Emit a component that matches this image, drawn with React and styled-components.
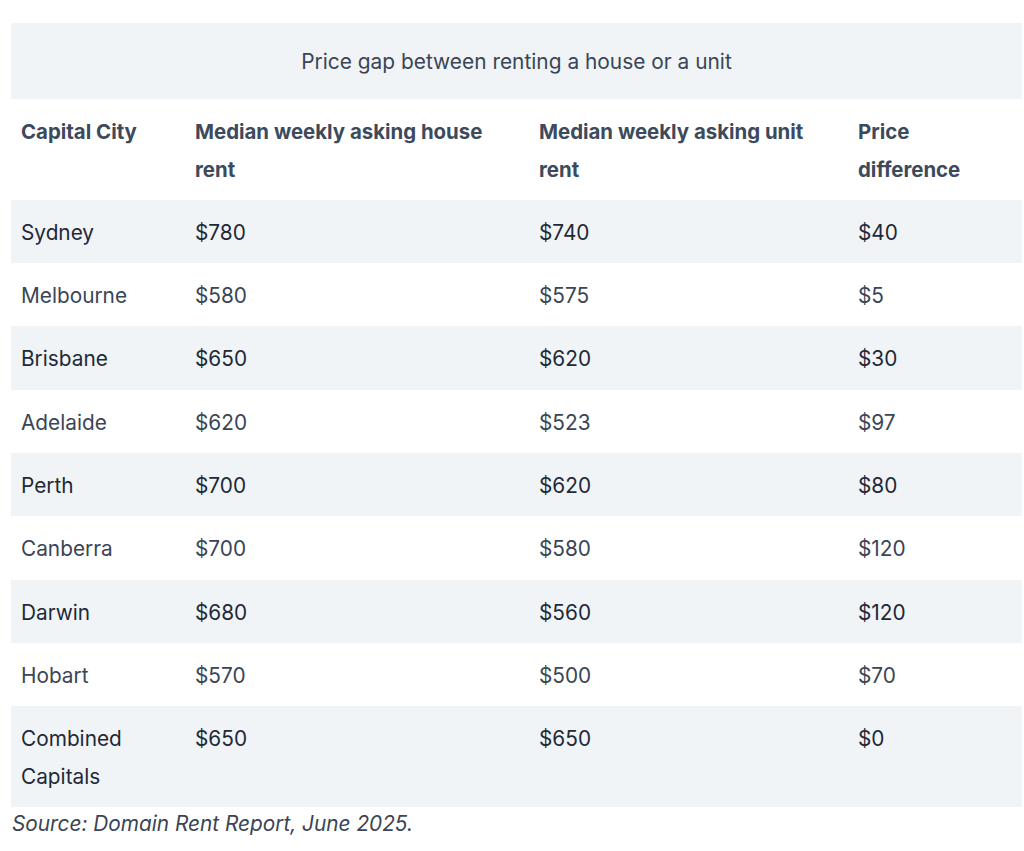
import React from 'react';
import styled, { createGlobalStyle } from 'styled-components';

const GlobalStyle = createGlobalStyle`
  html, body {
    margin: 0;
    padding: 0;
    background: #ffffff;
  }
  body {
    font-family: Inter, "Open Sans", "Liberation Sans", sans-serif;
    color: #2b3647;
  }
`;

const Page = styled.div`
  padding: 23px 2px 0 11px;
`;

const Table = styled.table`
  width: 100%;
  border-collapse: collapse;
  table-layout: fixed;
  font-size: 20.8px;
  line-height: 37.5px;
`;

const Caption = styled.caption`
  background: #f0f4f7;
  color: #3a4556;
  padding: 20px 10px 18px;
  text-align: center;
  font-size: 20.9px;
  line-height: 38px;
`;

const HeadCell = styled.th`
  text-align: left;
  vertical-align: top;
  font-weight: 700;
  font-size: 20.4px;
  color: #3c4a5c;
  padding: 14px 10px 11.8px;
`;

const Row = styled.tr`
  background: ${p => (p.$shaded ? '#f0f4f7' : '#ffffff')};
`;

const Cell = styled.td`
  vertical-align: top;
  padding: 14px 10px 11.8px;
  color: ${p => (p.$muted ? '#3a4556' : '#1f2937')};
`;

const Source = styled.p`
  margin: 0;
  padding-left: 1px;
  font-style: italic;
  font-size: 20.8px;
  line-height: 34px;
  color: #3a4556;
`;

const rows = [
  ['Sydney', '$780', '$740', '$40'],
  ['Melbourne', '$580', '$575', '$5'],
  ['Brisbane', '$650', '$620', '$30'],
  ['Adelaide', '$620', '$523', '$97'],
  ['Perth', '$700', '$620', '$80'],
  ['Canberra', '$700', '$580', '$120'],
  ['Darwin', '$680', '$560', '$120'],
  ['Hobart', '$570', '$500', '$70'],
  ['Combined Capitals', '$650', '$650', '$0'],
];

export default function App() {
  return (
    <Page>
      <GlobalStyle />
      <Table>
        <Caption>Price gap between renting a house or a unit</Caption>
        <colgroup>
          <col style={{ width: '174px' }} />
          <col style={{ width: '344px' }} />
          <col style={{ width: '319px' }} />
          <col />
        </colgroup>
        <thead>
          <tr>
            <HeadCell>Capital City</HeadCell>
            <HeadCell>Median weekly asking house rent</HeadCell>
            <HeadCell>Median weekly asking unit rent</HeadCell>
            <HeadCell>Price difference</HeadCell>
          </tr>
        </thead>
        <tbody>
          {rows.map((r, i) => (
            <Row key={r[0]} $shaded={i % 2 === 0}>
              {r.map((v, j) => (
                <Cell key={j} $muted={i % 2 === 1}>{v}</Cell>
              ))}
            </Row>
          ))}
        </tbody>
      </Table>
      <Source>Source: Domain Rent Report, June 2025.</Source>
    </Page>
  );
}
